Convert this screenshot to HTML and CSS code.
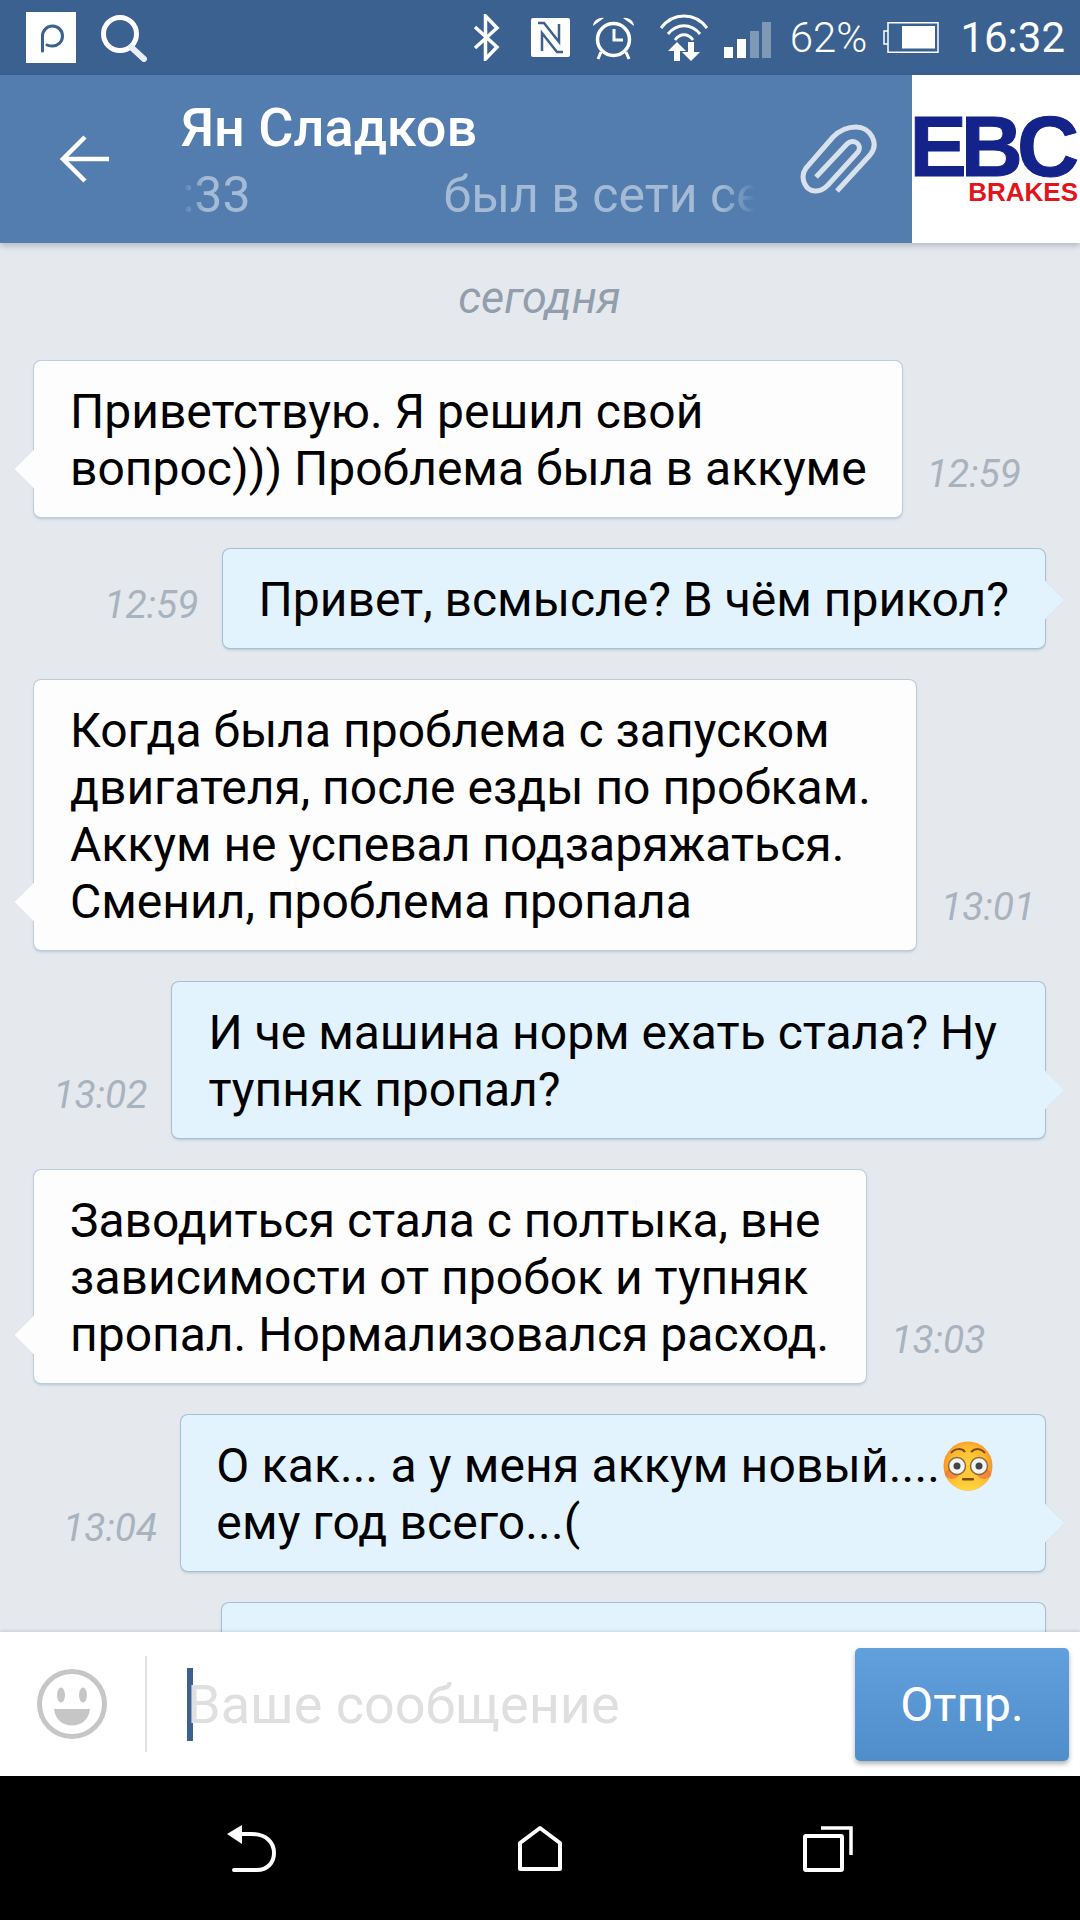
FILE: index.html
```html
<!DOCTYPE html>
<html lang="ru">
<head>
<meta charset="utf-8">
<title>Ян Сладков</title>
<link rel="stylesheet" href="styles.css">
</head>
<body>
<div class="screen">
  <div class="status">
    <svg class="app-icon" width="50" height="51" viewBox="0 0 50 51"><rect width="50" height="51" fill="#fff"/><path d="M16.500 39V24A10 10 0 1 1 26 34C24 34 22 33.500 21 33" fill="none" stroke="#3a6190" stroke-width="3" stroke-linecap="round"/></svg>
    <svg class="search-icon" width="47" height="48" viewBox="0 0 47 48"><circle cx="20" cy="20" r="16.500" fill="none" stroke="#fff" stroke-width="5"/><path d="M31 33L44 45" stroke="#e9eef4" stroke-width="6" stroke-linecap="round"/></svg>
    <div class="spacer"></div>
    <svg class="bt" width="27" height="47" viewBox="0 0 27 47"><path d="M2 13L24 33L12.500 45V2L24 14L2 34" fill="none" stroke="#fff" stroke-width="3.500"/></svg>
    <svg class="nfc" width="39" height="39" viewBox="0 0 39 39"><rect width="39" height="39" rx="2" fill="#fff"/><path d="M7 5H13L28 24V6M32 34H26L11 15V33" fill="none" stroke="#3a6190" stroke-width="2.500"/></svg>
    <svg class="alarm" width="45" height="45" viewBox="0 0 45 45"><circle cx="22.500" cy="24.500" r="16" fill="none" stroke="#fff" stroke-width="3.500"/><path d="M2 11A9 9 0 0 1 13 3ZM43 11A9 9 0 0 0 32 3Z" fill="#fff"/><path d="M23 14V25H32M10 37L7 44M35 37L38 44" fill="none" stroke="#fff" stroke-width="3"/></svg>
    <svg class="wifi" width="50" height="49" viewBox="0 0 50 49"><path d="M2 15C14 -1 36 -1 48 15M9 21C18 10 32 10 41 21M16 27C21 20 29 20 34 27" fill="none" stroke="#fff" stroke-width="3"/><path d="M18 29L27 38H21V48H15V38H9ZM32 48L23 39H29V29H35V39H41Z" fill="#fff"/></svg>
    <svg class="signal" width="47" height="36" viewBox="0 0 47 36"><rect y="25" width="9" height="11" fill="#fff"/><rect x="13" y="17" width="9" height="19" fill="#fff"/><rect x="26" y="9" width="9" height="27" fill="#fff" opacity=".35"/><rect x="38" width="9" height="36" fill="#fff" opacity=".35"/></svg>
    <span class="stat-pct">62%</span>
    <svg class="batt" width="56" height="31" viewBox="0 0 56 31"><path d="M5 9H1V22H5" fill="none" stroke="#fff" stroke-width="1.500"/><rect x="5" y=".75" width="50" height="29.500" fill="none" stroke="#fff" stroke-width="1.500"/><rect x="19" y="4" width="33" height="22.500" fill="#fff"/></svg>
    <span class="stat-time">16:32</span>
  </div>

  <header class="header">
    <svg class="back" width="49" height="48" viewBox="0 0 49 48"><path d="M49 24H3M25 2L3 24L25 46" fill="none" stroke="#fff" stroke-width="4.500"/></svg>
    <div class="title">
      <div class="name">Ян Сладков</div>
      <div class="sub"><span class="sub-track">16:33<span class="sub-gap"></span>был в сети сегодня</span></div>
    </div>
    <svg class="clip" width="80" height="70" viewBox="0 0 80 70"><path d="M37 67L70 31C80 19 70 3 56 3C46 3 38 8 33 13L6 44C-1 54 6 68 16 67C21 67 25 64 28 61L58 28C63 20 53 14 47 20L16 53" fill="none" stroke="#d8e1ec" stroke-width="5"/></svg>
    <div class="logo">
      <div class="logo-ebc">EBC</div>
      <div class="logo-brakes">BRAKES</div>
    </div>
  </header>

  <main class="chat">
    <div class="date">сегодня</div>
    <div class="row in">
      <div class="bubble">Приветствую. Я решил свой<br>вопрос))) Проблема была в аккуме</div>
      <div class="time">12:59</div>
    </div>
    <div class="row out">
      <div class="time">12:59</div>
      <div class="bubble">Привет, всмысле? В чём прикол?</div>
    </div>
    <div class="row in">
      <div class="bubble bubble-in-wide">Когда была проблема с запуском<br>двигателя, после езды по пробкам.<br>Аккум не успевал подзаряжаться.<br>Сменил, проблема пропала</div>
      <div class="time">13:01</div>
    </div>
    <div class="row out">
      <div class="time">13:02</div>
      <div class="bubble bubble-out-wide">И че машина норм ехать стала? Ну<br>тупняк пропал?</div>
    </div>
    <div class="row in">
      <div class="bubble bubble-in-mid">Заводиться стала с полтыка, вне<br>зависимости от пробок и тупняк<br>пропал. Нормализовался расход.</div>
      <div class="time">13:03</div>
    </div>
    <div class="row out">
      <div class="time">13:04</div>
      <div class="bubble bubble-out-emoji">О как... а у меня аккум новый....<svg class="emoji" width="50" height="50" viewBox="0 0 50 50"><defs><radialGradient id="face" cx="50%" cy="45%" r="55%"><stop offset="0" stop-color="#ffd23c"/><stop offset=".65" stop-color="#fdb72c"/><stop offset="1" stop-color="#f4862a"/></radialGradient><linearGradient id="chin" x1="0" y1="0" x2="0" y2="1"><stop offset=".55" stop-color="#ffdc40" stop-opacity="0"/><stop offset="1" stop-color="#ffdc40"/></linearGradient></defs><circle cx="25" cy="25" r="24.500" fill="url(#face)"/><circle cx="25" cy="25" r="24.500" fill="url(#chin)"/><ellipse cx="9" cy="33" rx="7" ry="5" fill="#f0603a" opacity=".55"/><ellipse cx="41" cy="33" rx="7" ry="5" fill="#f0603a" opacity=".55"/><path d="M8 12C12 7 19 7 22 11M28 11C32 7 38 7 42 12" fill="none" stroke="#7a4a20" stroke-width="2"/><circle cx="14" cy="25" r="8.500" fill="#f4f4f4" stroke="#8a6a3a" stroke-width="1.500"/><circle cx="36" cy="25" r="8.500" fill="#f4f4f4" stroke="#8a6a3a" stroke-width="1.500"/><circle cx="14" cy="25" r="3.500" fill="#444"/><circle cx="36" cy="25" r="3.500" fill="#444"/><rect x="19" y="37" width="12" height="2.500" rx="1" fill="#7a4a20"/></svg><br>ему год всего...(</div>
    </div>
    <div class="row out">
      <div class="bubble bubble-cut"></div>
    </div>
  </main>

  <div class="composer">
    <svg class="smile" width="70" height="70" viewBox="0 0 70 70"><circle cx="35" cy="35" r="32.500" fill="none" stroke="#c6c6c6" stroke-width="5"/><ellipse cx="24" cy="26" rx="4" ry="7.500" fill="#c6c6c6"/><ellipse cx="46" cy="26" rx="4" ry="7.500" fill="#c6c6c6"/><path d="M17 40H53C51 62 19 62 17 40Z" fill="#c6c6c6"/></svg>
    <div class="divider"></div>
    <div class="field"><span class="caret"></span><span class="placeholder">Ваше сообщение</span></div>
    <div class="send">Отпр.</div>
  </div>

  <nav class="nav">
    <svg width="50" height="47" viewBox="0 0 50 47"><path d="M0 9L15 0V19Z" fill="#fff"/><path d="M14 9H24C40 9 47 18 47 28C47 38 40 45 30 45H7" fill="none" stroke="#fff" stroke-width="4" stroke-linecap="round"/></svg>
    <svg width="44" height="47" viewBox="0 0 44 47"><path d="M22 3L42 18V44H2V18Z" fill="none" stroke="#fff" stroke-width="4" stroke-linejoin="round"/></svg>
    <svg width="50" height="47" viewBox="0 0 50 47"><path d="M18 3H48V30" fill="none" stroke="#fff" stroke-width="3.500"/><rect x="2" y="11" width="37" height="34" rx="1" fill="none" stroke="#fff" stroke-width="4"/></svg>
  </nav>
</div>
</body>
</html>
```
FILE: styles.css
```css
* { box-sizing: border-box; }
html, body { margin: 0; padding: 0; }
body { width: 1080px; height: 1920px; overflow: hidden; font-family: Roboto, "Noto Sans", sans-serif; }
svg { display: block; flex: none; }

.screen { width: 1080px; height: 1920px; display: flex; flex-direction: column; background: #e5e9ee; }

.status { height: 75px; flex: none; display: flex; align-items: center; background: #3a6190; color: #fff; padding: 0 15px 0 26px; }
.search-icon { margin-left: 24px; }
.spacer { flex: 1; }
.nfc { margin-left: 31px; }
.alarm { margin-left: 21px; }
.wifi { margin-left: 23px; }
.signal { margin-left: 15px; margin-top: 4px; }
.stat-pct { margin-left: 19px; font-size: 42px; font-weight: 300; }
.batt { margin-left: 16px; }
.stat-time { margin-left: 21px; font-size: 42px; font-weight: 400; }

.header { height: 168px; flex: none; display: flex; align-items: center; background: #527dae; box-shadow: 0 3px 6px rgba(40, 50, 70, .25); position: relative; z-index: 1; padding-left: 60px; }
.title { margin-left: 72px; width: 575px; }
.name { font-size: 54px; font-weight: 500; line-height: 60px; color: #fff; padding-top: 4px; }
.sub { margin-top: 7px; width: 575px; overflow: hidden; white-space: nowrap; font-size: 50px; line-height: 60px; color: #a5bbd5; -webkit-mask-image: linear-gradient(90deg, transparent 0, #000 24px, #000 540px, transparent 575px); mask-image: linear-gradient(90deg, transparent 0, #000 24px, #000 540px, transparent 575px); }
.sub-track { display: inline-block; margin-left: -55px; }
.sub-gap { display: inline-block; width: 193px; }
.clip { margin-left: 44px; margin-right: 32px; }
.logo { width: 168px; height: 168px; background: #fff; display: flex; flex-direction: column; align-items: flex-end; padding: 38px 2px 0 0; font-family: "Liberation Sans", Arial, sans-serif; font-weight: 700; }
.logo-ebc { font-size: 86px; line-height: 66px; letter-spacing: -6px; color: #14238a; -webkit-text-stroke: 1px #14238a; margin-right: 5px; }
.logo-brakes { font-size: 26px; line-height: 26px; color: #e2151c; }

.chat { flex: 1; min-height: 0; overflow: hidden; padding: 0 35px 0 34px; display: flex; flex-direction: column; gap: 32px; }
.date { font-size: 45px; line-height: 50px; font-style: italic; color: #929eac; text-align: center; margin: 30px 0 6px; }
.row { display: flex; align-items: flex-end; flex: none; }
.row.out { justify-content: flex-end; }
.bubble { position: relative; font-size: 48px; line-height: 57px; color: #000; padding: 22px 35px 20px 36px; border-radius: 7px; background: #fdfdfd; box-shadow: 0 0 0 1px #bcccdc, 0 2px 3px rgba(100, 130, 160, .35); }
.bubble::after { content: ""; position: absolute; left: -14px; bottom: 34px; width: 28px; height: 28px; background: inherit; transform: rotate(45deg); box-shadow: -1px 1px 0 #bcccdc; clip-path: polygon(0 0, 0 100%, 100% 100%); }
.out .bubble { background: #e2f3fe; padding: 22px 36px 20px 36px; box-shadow: 0 0 0 1px #a4bfd6, 0 2px 3px rgba(100, 130, 160, .35); }
.out .bubble::after { left: auto; right: -14px; box-shadow: 1px -1px 0 #a4bfd6; clip-path: polygon(0 0, 100% 0, 100% 100%); }
.bubble.bubble-in-wide { padding-right: 45px; }
.bubble.bubble-in-mid { padding-right: 37px; }
.out .bubble.bubble-out-wide { padding-right: 48px; padding-left: 37px; }
.out .bubble.bubble-out-emoji { padding-right: 52px; padding-left: 35px; letter-spacing: .15px; }
.bubble.bubble-cut { width: 823px; height: 120px; }
.bubble-cut::after { display: none; }
.emoji { display: inline-block; vertical-align: -9px; margin-left: 3px; }
.time { font-size: 39px; line-height: 42px; font-style: italic; color: #a9b3bf; margin-bottom: 22px; }
.in .time { margin-left: 25px; }
.out .time { margin-right: 24px; }

.composer { height: 144px; flex: none; display: flex; align-items: center; background: #fff; position: relative; z-index: 1; padding: 0 11px 0 37px; box-shadow: 0 -1px 3px rgba(40, 50, 70, .15); }
.divider { width: 2px; height: 96px; background: #e3e3e3; margin-left: 38px; }
.field { flex: 1; display: flex; align-items: center; margin-left: 40px; }
.caret { width: 6px; height: 73px; background: #3a6190; flex: none; margin-right: -6px; }
.placeholder { font-size: 54px; color: #dfdfdf; }
.send { width: 214px; height: 113px; display: flex; align-items: center; justify-content: center; border-radius: 5px; background: linear-gradient(#629fdd, #508dcb); color: #fff; font-size: 48px; box-shadow: 0 3px 5px rgba(0, 0, 0, .3); }

.nav { height: 144px; flex: none; background: #000; display: flex; justify-content: center; align-items: flex-start; gap: 241px; padding-top: 49px; }
```
